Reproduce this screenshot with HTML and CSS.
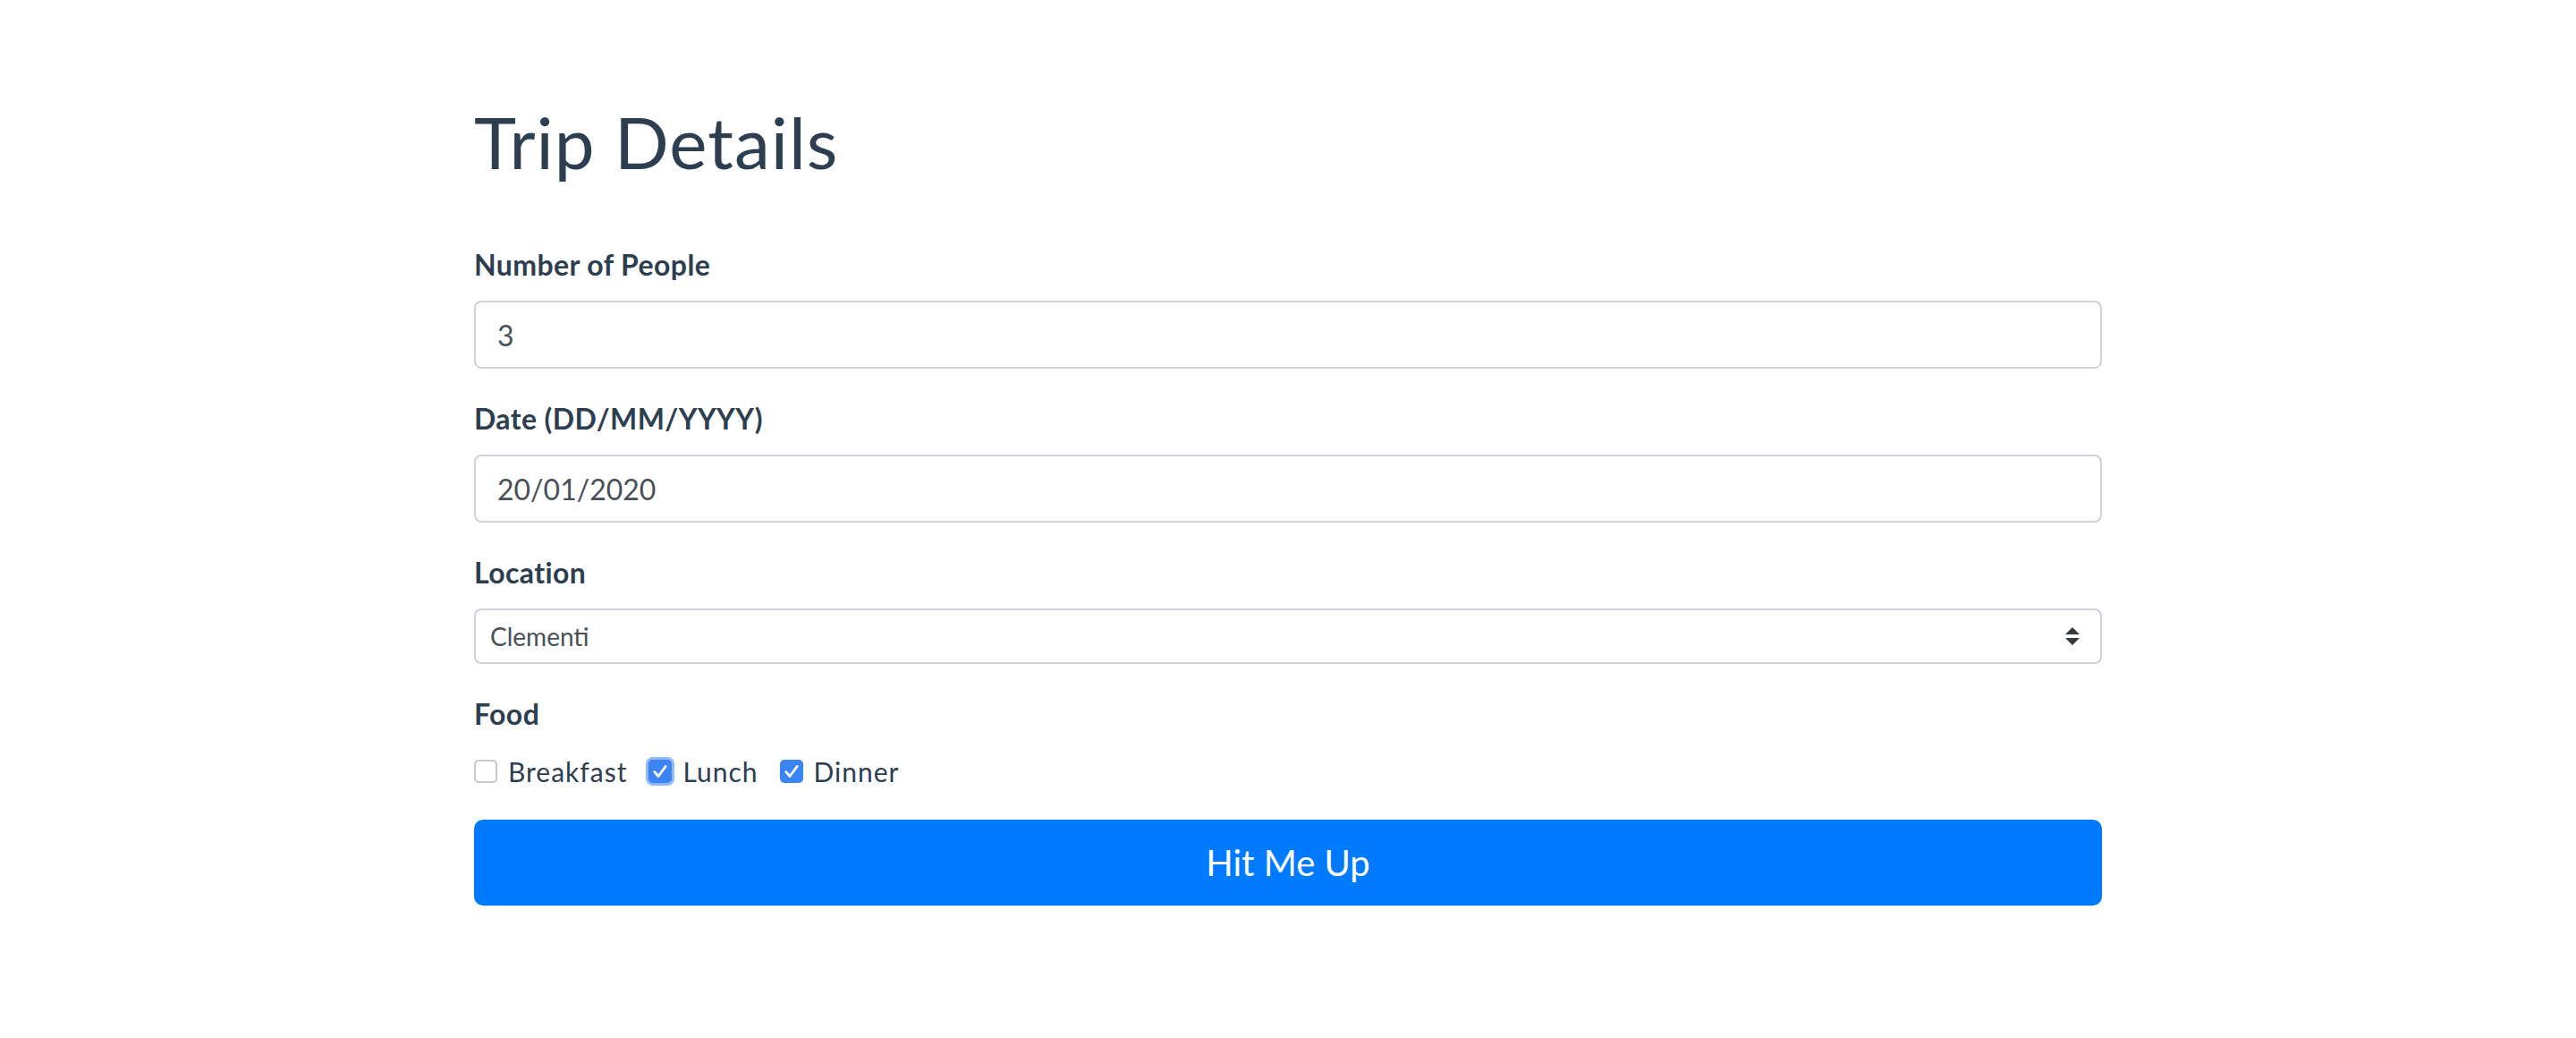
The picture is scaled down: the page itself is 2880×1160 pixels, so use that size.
FILE: index.html
```html
<!DOCTYPE html>
<html lang="en">
<head>
<meta charset="utf-8">
<title>Trip Details</title>
<link rel="stylesheet" href="styles.css">
</head>
<body>
<main class="container">
  <h1 class="title">Trip Details</h1>
  <form class="form">
    <div class="group">
      <label class="label" for="people">Number of People</label>
      <input class="field" id="people" type="text" value="3">
    </div>
    <div class="group">
      <label class="label" for="date">Date (DD/MM/YYYY)</label>
      <input class="field" id="date" type="text" value="20/01/2020">
    </div>
    <div class="group">
      <label class="label" for="location">Location</label>
      <div class="select-wrap">
        <select class="select" id="location">
          <option>Clementi</option>
        </select>
        <svg class="select-arrow" viewBox="0 0 4 5" width="16" height="20" aria-hidden="true"><path fill="#343a40" d="M2 0L0 2h4zm0 5L0 3h4z"/></svg>
      </div>
    </div>
    <div class="group group-food">
      <span class="label">Food</span>
      <div class="checks">
        <label class="check"><span class="box"></span>Breakfast</label>
        <label class="check"><span class="box box-checked box-focus"><svg viewBox="0 0 16 16" width="26" height="26" aria-hidden="true"><path d="M4.2 8.4l2.6 3L11.8 4.6" fill="none" stroke="#fff" stroke-width="1.7" stroke-linecap="round" stroke-linejoin="round"/></svg></span>Lunch</label>
        <label class="check"><span class="box box-checked"><svg viewBox="0 0 16 16" width="26" height="26" aria-hidden="true"><path d="M4.2 8.4l2.6 3L11.8 4.6" fill="none" stroke="#fff" stroke-width="1.7" stroke-linecap="round" stroke-linejoin="round"/></svg></span>Dinner</label>
      </div>
    </div>
    <button class="btn" type="button">Hit Me Up</button>
  </form>
</main>
</body>
</html>
```

FILE: styles.css
```css
* {
  box-sizing: border-box;
}

body {
  margin: 0;
  background: #ffffff;
  color: #2c3e50;
  font-family: Lato, "Noto Sans", sans-serif;
}

.container {
  width: 1820px;
  margin: 0 auto;
  padding-top: 110px;
}

.title {
  margin: 0 0 66px;
  font-size: 80px;
  font-weight: 400;
  line-height: 96px;
  letter-spacing: 1px;
}

.form {
  display: flex;
  flex-direction: column;
}

.group {
  margin-bottom: 32px;
}

.group-food {
  margin-bottom: 30px;
}

.label {
  display: block;
  margin-bottom: 16px;
  font-size: 32px;
  font-weight: 700;
  line-height: 48px;
  letter-spacing: 0.4px;
}

.field {
  display: block;
  width: 100%;
  height: 76px;
  padding: 0 24px;
  border: 2px solid #ced4da;
  border-radius: 8px;
  background: #fff;
  color: #495057;
  font-family: Lato, "Noto Sans", sans-serif;
  font-size: 32px;
  outline: none;
}

.select-wrap {
  position: relative;
}

.select {
  display: block;
  width: 100%;
  height: 62px;
  padding: 0 16px;
  border: 2px solid #ced4da;
  border-radius: 8px;
  background: #fff;
  color: #495057;
  font-family: Lato, "Noto Sans", sans-serif;
  font-size: 28px;
  -webkit-appearance: none;
  appearance: none;
  outline: none;
}

.select-arrow {
  position: absolute;
  right: 25px;
  top: 21px;
}

.checks {
  display: flex;
  align-items: center;
  height: 48px;
}

.check {
  display: inline-flex;
  align-items: center;
  margin-right: 24px;
  font-size: 30px;
  line-height: 48px;
  letter-spacing: 1px;
  color: #2c3e50;
}

.box {
  display: inline-flex;
  width: 26px;
  height: 26px;
  margin-right: 12px;
  border: 2px solid #c8c8c8;
  border-radius: 5px;
  background: #fff;
}

.box-checked {
  border-color: #3b84f4;
  background: #3b84f4;
  align-items: center;
  justify-content: center;
}

.box-checked svg {
  flex: none;
}

.box-focus {
  box-shadow: 0 0 0 3px #8fb9f7;
}

.btn {
  display: block;
  width: 100%;
  height: 96px;
  border: 0;
  border-radius: 10px;
  background: #007bff;
  color: #fff;
  font-family: Lato, "Noto Sans", sans-serif;
  font-size: 40px;
  font-weight: 400;
  cursor: pointer;
}
```
